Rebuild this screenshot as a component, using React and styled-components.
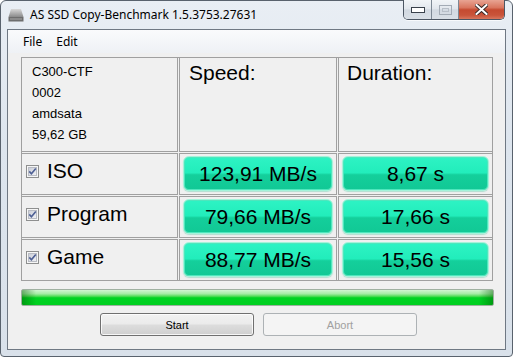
import { Fragment } from "react";
import styled, { createGlobalStyle } from "styled-components";

const DRIVE = ["C300-CTF", "0002", "amdsata", "59,62 GB"];

const ROWS = [
  { name: "ISO", speed: "123,91 MB/s", duration: "8,67 s" },
  { name: "Program", speed: "79,66 MB/s", duration: "17,66 s" },
  { name: "Game", speed: "88,77 MB/s", duration: "15,56 s" },
];

const GlobalStyle = createGlobalStyle`
  html, body {
    margin: 0;
    padding: 0;
    width: 513px;
    height: 357px;
    overflow: hidden;
    background: #ffffff;
  }
  * {
    box-sizing: border-box;
  }
`;

const Window = styled.div`
  width: 513px;
  height: 357px;
  display: flex;
  flex-direction: column;
  border: 1px solid #59626d;
  border-radius: 6px 6px 4px 4px;
  background: linear-gradient(to bottom, #e9eef4 0%, #dde5ee 40%, #d9e1ea 100%);
`;

const TitleBar = styled.div`
  height: 28px;
  display: flex;
  align-items: flex-start;
  flex-shrink: 0;
`;

const AppIcon = styled.svg`
  margin: 7px 0 0 7px;
  flex-shrink: 0;
`;

const Title = styled.div`
  margin: 6px 0 0 6px;
  font-family: "Noto Sans", "Open Sans", sans-serif;
  font-size: 12px;
  line-height: 16px;
  color: #000000;
  white-space: nowrap;
`;

const CaptionGroup = styled.div`
  margin: -1px 7px 0 auto;
  height: 20px;
  display: flex;
  border: 1px solid #4c5663;
  border-top: none;
  border-radius: 0 0 5px 5px;
  overflow: hidden;
  box-shadow: 0 1px 0 rgba(255, 255, 255, 0.7);
`;

const CaptionButton = styled.div`
  width: ${({ $wide }) => ($wide ? "46px" : "27px")};
  height: 100%;
  display: flex;
  align-items: center;
  justify-content: center;
  border-left: ${({ $first }) => ($first ? "none" : "1px solid #7d8894")};
  background: ${({ $close }) =>
    $close
      ? "linear-gradient(to bottom, #e8a493 0%, #d9765f 40%, #c54a30 52%, #c9543a 80%, #d8765d 100%)"
      : "linear-gradient(to bottom, #f1f4f7 0%, #e2e7ed 45%, #d2d9e1 52%, #d9dfe6 100%)"};
`;

const Client = styled.div`
  flex: 1;
  margin: 0 6px 6px 6px;
  border: 1px solid #6f7883;
  background: #f0f0f0;
  display: flex;
  flex-direction: column;
`;

const MenuBar = styled.div`
  height: 23px;
  display: flex;
  align-items: center;
  padding-left: 8px;
  background: linear-gradient(to bottom, #fafbfc 0%, #f3f5f8 60%, #eef1f5 100%);
  flex-shrink: 0;
`;

const MenuItem = styled.div`
  padding: 0 7px;
  font-family: "Noto Sans", "Open Sans", sans-serif;
  font-size: 12px;
  line-height: 16px;
  color: #000000;
`;

const Body = styled.div`
  padding: 4px 0 0 13px;
  display: flex;
  flex-direction: column;
`;

const Grid = styled.div`
  display: grid;
  grid-template-columns: 155px 156px 153px;
  grid-template-rows: 93px 40px 40px 40px;
  gap: 3px;
  width: 472px;
  border: 1px solid #a0a0a0;
`;

const Cell = styled.div`
  box-shadow: 0 0 0 1px #a0a0a0;
  display: flex;
  font-family: "Liberation Sans", Arial, sans-serif;
  color: #000000;
`;

const DriveInfo = styled(Cell)`
  flex-direction: column;
  padding: 3px 0 0 10px;
  font-size: 13px;
  line-height: 21px;
`;

const HeaderCell = styled(Cell)`
  padding: ${({ $pad }) => `3px 0 0 ${$pad}px`};
  font-size: 21px;
  line-height: 24px;
`;

const LabelCell = styled(Cell)`
  align-items: center;
  padding: 0 0 6px 4px;
  gap: 8px;
  font-size: 21px;
  line-height: 24px;
`;

const ValueCell = styled(Cell)`
  align-items: center;
  padding: 0 3px 2px 3px;
`;

const Result = styled.div`
  flex: 1;
  height: 35px;
  display: flex;
  align-items: center;
  justify-content: center;
  border: 1px solid #a3f3da;
  border-radius: 6px;
  box-shadow: inset 0 0 0 1px #4fe6bd, 0 1px 1px rgba(60, 190, 150, 0.35);
  background: linear-gradient(
    to bottom,
    #2ef3c4 0%,
    #22edbb 48%,
    #14cf9b 54%,
    #11c895 100%
  );
  font-size: 21px;
  line-height: 24px;
  padding-top: 1px;
`;

const Progress = styled.div`
  margin-top: 8px;
  width: 473px;
  height: 17px;
  border: 1px solid #9fb0a0;
  border-radius: 2px;
  background: linear-gradient(
      to right,
      rgba(0, 90, 0, 0.45) 0%,
      rgba(0, 90, 0, 0) 3%,
      rgba(0, 90, 0, 0) 97%,
      rgba(0, 90, 0, 0.45) 100%
    ),
    linear-gradient(
      to bottom,
      #d2f5d2 0%,
      #a6eca6 25%,
      #52dc58 42%,
      #00d322 52%,
      #00cf20 100%
    );
`;

const ButtonRow = styled.div`
  margin-top: 7px;
  padding-left: 79px;
  display: flex;
  gap: 9px;
`;

const Button = styled.div`
  width: 154px;
  height: 23px;
  display: flex;
  align-items: center;
  justify-content: center;
  border-radius: 3px;
  font-family: "Liberation Sans", Arial, sans-serif;
  font-size: 11px;
  border: 1px solid ${({ $disabled }) => ($disabled ? "#adb2b5" : "#707070")};
  color: ${({ $disabled }) => ($disabled ? "#a0a0a0" : "#000000")};
  background: ${({ $disabled }) =>
    $disabled
      ? "#f4f4f4"
      : "linear-gradient(to bottom, #f2f2f2 0%, #ebebeb 48%, #dddddd 52%, #cfcfcf 100%)"};
  box-shadow: ${({ $disabled }) =>
    $disabled ? "none" : "inset 0 0 0 1px rgba(255, 255, 255, 0.8)"};
`;

const Checkbox = () => (
  <svg width="13" height="13" viewBox="0 0 13 13">
    <defs>
      <linearGradient id="cbFill" x1="0" y1="0" x2="1" y2="1">
        <stop offset="0" stopColor="#c9ccd6" />
        <stop offset="1" stopColor="#f2f3f6" />
      </linearGradient>
    </defs>
    <rect x="0.5" y="0.5" width="12" height="12" fill="#f6f6f6" stroke="#8e8f8f" />
    <rect x="2.5" y="2.5" width="8" height="8" fill="url(#cbFill)" stroke="#b9bcc4" />
    <path d="M3.3 6.4 L5.4 8.8 L9.8 3.4" stroke="#4d5f94" strokeWidth="1.6" fill="none" />
  </svg>
);

const DriveIcon = () => (
  <AppIcon width="16" height="14" viewBox="0 0 16 14">
    <defs>
      <linearGradient id="drvTop" x1="0" y1="0" x2="0" y2="1">
        <stop offset="0" stopColor="#d8d8d8" />
        <stop offset="1" stopColor="#8a8a8a" />
      </linearGradient>
    </defs>
    <path d="M3 1 H13 L15.5 9 H0.5 Z" fill="url(#drvTop)" />
    <rect x="0.5" y="9" width="15" height="4.5" fill="#6e6e6e" />
    <rect x="2" y="10.5" width="12" height="1" fill="#a8a8a8" />
  </AppIcon>
);

const App = () => {
  return (
    <>
      <GlobalStyle />
      <Window>
        <TitleBar>
          <DriveIcon />
          <Title>AS SSD Copy-Benchmark 1.5.3753.27631</Title>
          <CaptionGroup>
            <CaptionButton $first>
              <svg width="14" height="6" viewBox="0 0 14 6">
                <rect x="0.5" y="0.5" width="13" height="5" fill="#ffffff" stroke="#39414b" />
              </svg>
            </CaptionButton>
            <CaptionButton>
              <svg width="13" height="10" viewBox="0 0 13 10">
                <rect x="0.5" y="0.5" width="12" height="9" fill="none" stroke="#a3abb5" />
                <rect x="3.5" y="3.5" width="6" height="3" fill="none" stroke="#b8bfc8" />
              </svg>
            </CaptionButton>
            <CaptionButton $close $wide>
              <svg width="13" height="11" viewBox="0 0 13 11">
                <path
                  d="M1.5 1 L11.5 10 M11.5 1 L1.5 10"
                  stroke="#3a2a28"
                  strokeWidth="4"
                  strokeLinecap="square"
                />
                <path
                  d="M1.5 1 L11.5 10 M11.5 1 L1.5 10"
                  stroke="#ffffff"
                  strokeWidth="2"
                  strokeLinecap="square"
                />
              </svg>
            </CaptionButton>
          </CaptionGroup>
        </TitleBar>
        <Client>
          <MenuBar>
            <MenuItem>File</MenuItem>
            <MenuItem>Edit</MenuItem>
          </MenuBar>
          <Body>
            <Grid>
              <DriveInfo>
                {DRIVE.map((line) => (
                  <div key={line}>{line}</div>
                ))}
              </DriveInfo>
              <HeaderCell $pad={9}>Speed:</HeaderCell>
              <HeaderCell $pad={8}>Duration:</HeaderCell>
              {ROWS.map((row) => (
                <Fragment key={row.name}>
                  <LabelCell>
                    <Checkbox />
                    {row.name}
                  </LabelCell>
                  <ValueCell>
                    <Result>{row.speed}</Result>
                  </ValueCell>
                  <ValueCell>
                    <Result>{row.duration}</Result>
                  </ValueCell>
                </Fragment>
              ))}
            </Grid>
            <Progress />
            <ButtonRow>
              <Button>Start</Button>
              <Button $disabled>Abort</Button>
            </ButtonRow>
          </Body>
        </Client>
      </Window>
    </>
  );
};

export default App;
